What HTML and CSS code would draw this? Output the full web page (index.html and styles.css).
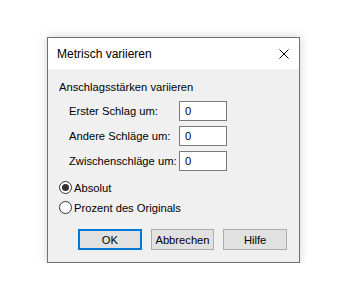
FILE: index.html
```html
<!DOCTYPE html>
<html lang="de">
<head>
<meta charset="utf-8">
<title>Metrisch variieren</title>
<link rel="stylesheet" href="styles.css">
</head>
<body>
<div class="dialog">
  <div class="titlebar">
    <span class="title">Metrisch variieren</span>
    <svg class="close" width="10" height="10" viewBox="0 0 10 10"><path d="M0.5 0.5L9.5 9.5M9.5 0.5L0.5 9.5" stroke="#000" stroke-width="1" fill="none"/></svg>
  </div>
  <div class="body">
    <div class="group-label">Anschlagsstärken variieren</div>
    <div class="rows">
      <div class="row"><span class="lbl">Erster Schlag um:</span><span class="input">0</span></div>
      <div class="row"><span class="lbl">Andere Schläge um:</span><span class="input">0</span></div>
      <div class="row"><span class="lbl">Zwischenschläge um:</span><span class="input">0</span></div>
    </div>
    <div class="radios">
      <div class="radio"><span class="circle checked"></span><span>Absolut</span></div>
      <div class="radio"><span class="circle"></span><span>Prozent des Originals</span></div>
    </div>
    <div class="buttons">
      <span class="btn default">OK</span>
      <span class="btn">Abbrechen</span>
      <span class="btn">Hilfe</span>
    </div>
  </div>
</div>
</body>
</html>
```

FILE: styles.css
```css
html, body {
  margin: 0;
  padding: 0;
  background: #ffffff;
}
body {
  padding: 37px 0 0 47px;
  font-family: "Liberation Sans", Arial, sans-serif;
  font-size: 11.2px;
  color: #000;
  white-space: nowrap;
}
.dialog {
  width: 251px;
  height: 224px;
  border: 1px solid #707070;
  background: #f0f0f0;
  box-shadow: 0 0 10px rgba(0,0,0,0.18);
  display: flex;
  flex-direction: column;
}
.titlebar {
  height: 31px;
  background: #ffffff;
  display: flex;
  align-items: center;
  justify-content: space-between;
  padding: 0 10px 0 9px;
}
.title {
  font-size: 12px;
  line-height: 16px;
}
.close {
  display: block;
}
.body {
  padding: 10px 12px 0 11px;
  display: flex;
  flex-direction: column;
}
.group-label {
  line-height: 16px;
  height: 16px;
}
.rows {
  display: flex;
  flex-direction: column;
  gap: 5px;
  padding: 6px 0 0 10px;
}
.row {
  display: flex;
  align-items: center;
  height: 20px;
}
.lbl {
  width: 110px;
  flex-shrink: 0;
  line-height: 16px;
}
.input {
  box-sizing: border-box;
  width: 48px;
  height: 20px;
  border: 1px solid #7a7a7a;
  background: #fff;
  padding: 0 5px;
  line-height: 18px;
}
.radios {
  display: flex;
  flex-direction: column;
  gap: 7px;
  padding-top: 10px;
}
.radio {
  display: flex;
  align-items: center;
  gap: 2px;
  height: 13px;
  line-height: 16px;
}
.circle {
  box-sizing: border-box;
  width: 13px;
  height: 13px;
  border: 1px solid #333;
  border-radius: 50%;
  background: #fff;
  display: flex;
  align-items: center;
  justify-content: center;
}
.circle.checked::after {
  content: "";
  width: 7px;
  height: 7px;
  border-radius: 50%;
  background: #333;
}
.buttons {
  display: flex;
  gap: 9px;
  padding: 15px 0 0 19px;
}
.btn {
  box-sizing: border-box;
  width: 64px;
  height: 21px;
  border: 1px solid #adadad;
  background: #e1e1e1;
  display: flex;
  align-items: center;
  justify-content: center;
  line-height: 16px;
}
.btn.default {
  border: 2px solid #0078d7;
}
```
